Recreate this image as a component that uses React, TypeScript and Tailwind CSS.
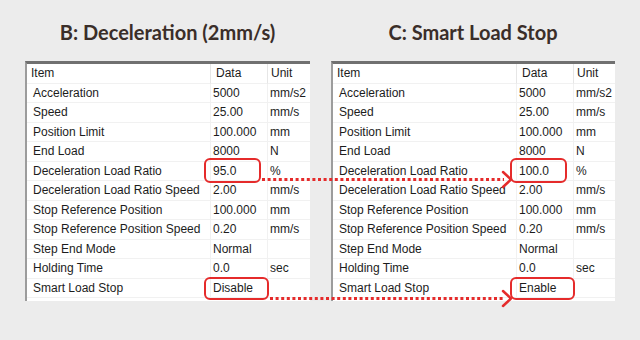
import React from 'react';

type Row = { item: string; data: string; unit: string; mark?: 'ratio' | 'smart' };

const baseRows: Row[] = [
  { item: 'Acceleration', data: '5000', unit: 'mm/s2' },
  { item: 'Speed', data: '25.00', unit: 'mm/s' },
  { item: 'Position Limit', data: '100.000', unit: 'mm' },
  { item: 'End Load', data: '8000', unit: 'N' },
  { item: 'Deceleration Load Ratio', data: '95.0', unit: '%', mark: 'ratio' },
  { item: 'Deceleration Load Ratio Speed', data: '2.00', unit: 'mm/s' },
  { item: 'Stop Reference Position', data: '100.000', unit: 'mm' },
  { item: 'Stop Reference Position Speed', data: '0.20', unit: 'mm/s' },
  { item: 'Step End Mode', data: 'Normal', unit: '' },
  { item: 'Holding Time', data: '0.0', unit: 'sec' },
  { item: 'Smart Load Stop', data: 'Disable', unit: '', mark: 'smart' },
];

const rowsC: Row[] = baseRows.map((r) =>
  r.mark === 'ratio' ? { ...r, data: '100.0' } : r.mark === 'smart' ? { ...r, data: 'Enable' } : r
);

const cell = 'h-[19.5px] leading-[19.5px] border-b border-[#f1f1f1] whitespace-nowrap overflow-hidden';

const ParamTable: React.FC<{ rows: Row[] }> = ({ rows }) => (
  <div className="bg-white border-t-[3px] border-l-2 border-t-[#707070] border-l-[#9c9c9c] pb-[3px] text-[12px] text-[#1c1c1c] font-['Liberation_Sans',Arial,sans-serif]">
    <div className="grid grid-cols-[184px_57px_1fr]">
      <div className={`${cell} pl-[4px] border-r border-r-[#e6e6e6]`}>Item</div>
      <div className={`${cell} pl-[5px] border-r border-r-[#e6e6e6]`}>Data</div>
      <div className={`${cell} pl-[3px]`}>Unit</div>
      {rows.map((r) => (
        <React.Fragment key={r.item}>
          <div className={`${cell} pl-[6px] border-r border-r-[#f1f1f1]`}>{r.item}</div>
          <div className={`${cell} pl-[2px] border-r border-r-[#f1f1f1] relative overflow-visible`}>
            {r.data}
            {r.mark === 'ratio' && (
              <span className="absolute left-[-7px] top-[-4px] w-[57px] h-[25px] border-2 border-[#e52b2b] rounded-[6px]" />
            )}
            {r.mark === 'smart' && (
              <span className="absolute left-[-7px] top-[-2px] w-[65px] h-[23px] border-2 border-[#e52b2b] rounded-[6px]" />
            )}
          </div>
          <div className={`${cell} pl-[2px]`}>{r.unit}</div>
        </React.Fragment>
      ))}
    </div>
  </div>
);

const Panel: React.FC<{ title: string; rows: Row[]; width: string }> = ({ title, rows, width }) => (
  <div className={`${width} flex flex-col`}>
    <div className="pt-[20px] h-[44px] leading-[24px] text-center text-[20px] font-bold text-[#3a2e29] font-['Lato',sans-serif]">
      {title}
    </div>
    <div className="mt-[17px]">
      <ParamTable rows={rows} />
    </div>
  </div>
);

export default function App() {
  return (
    <div className="relative w-[640px] h-[340px] bg-[#ececec] overflow-hidden">
      <div className="flex gap-[21px] pl-[25px]">
        <Panel title="B: Deceleration (2mm/s)" rows={baseRows} width="w-[285px]" />
        <Panel title="C: Smart Load Stop" rows={rowsC} width="w-[284px]" />
      </div>
      <svg className="absolute inset-0 pointer-events-none" width="640" height="340" viewBox="0 0 640 340">
        <g stroke="#e52b2b" fill="none">
          <line x1="262" y1="179.5" x2="504" y2="179.5" strokeWidth="3" strokeDasharray="3 2.6" />
          <polyline points="503,172 511,179.5 503,187" strokeWidth="2.5" strokeLinecap="round" strokeLinejoin="round" />
          <line x1="270" y1="298.5" x2="504" y2="298.5" strokeWidth="3" strokeDasharray="3 2.6" />
          <polyline points="503,291 511,298.5 503,306" strokeWidth="2.5" strokeLinecap="round" strokeLinejoin="round" />
        </g>
      </svg>
    </div>
  );
}
